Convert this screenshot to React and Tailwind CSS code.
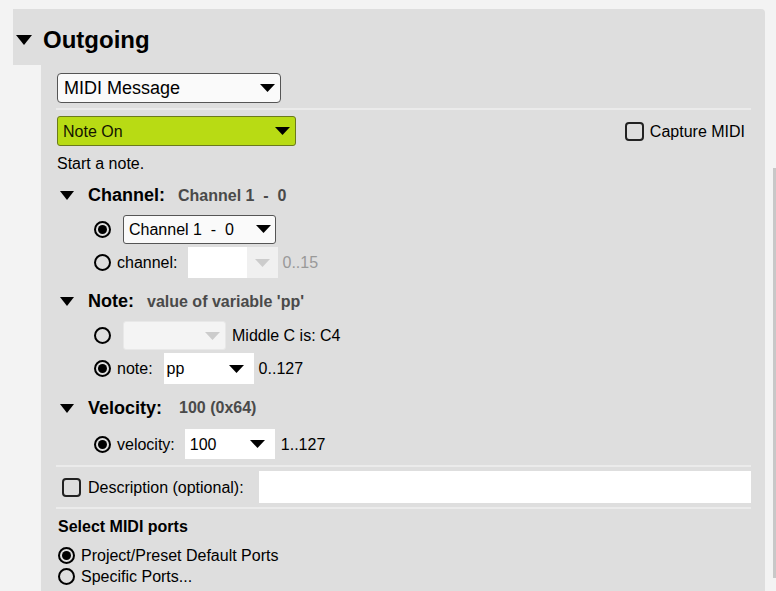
import React from "react";

const Arrow = ({ className = "fill-black" }) => (
  <svg width="15" height="8" viewBox="0 0 15 8" className={className}>
    <polygon points="0,0 15,0 7.5,8" />
  </svg>
);

const Caret = ({ w = 14, h = 9 }) => (
  <svg width={w} height={h} viewBox={`0 0 ${w} ${h}`} className="fill-black shrink-0">
    <polygon points={`0,0 ${w},0 ${w / 2},${h}`} />
  </svg>
);

const Radio = ({ checked }) => (
  <span className="w-[17px] h-[17px] rounded-full border-2 border-black flex items-center justify-center shrink-0">
    {checked && <span className="w-[9px] h-[9px] rounded-full bg-black" />}
  </span>
);

const Checkbox = () => (
  <span className="block w-[19px] h-[19px] rounded-[4px] border-2 border-[#222] shrink-0" />
);

const Separator = () => <div className="h-[2px] bg-[#ebebeb]" />;

const Section = ({ title, value, gap = "ml-[14px]" }) => (
  <div className="flex items-center pl-[4px] pt-[2px] h-full">
    <Caret />
    <span className="ml-[14px] text-[18px] font-bold text-black">{title}</span>
    <span className={`${gap} text-[16px] font-bold text-[#4a4a4a] whitespace-pre`}>{value}</span>
  </div>
);

const App = () => {
  return (
    <div
      className="w-[776px] h-[591px] bg-[#f3f3f3] overflow-hidden flex text-black"
      style={{ fontFamily: '"Liberation Sans", Arial, sans-serif' }}
    >
      <div className="w-[765px] pl-[13px] pt-[9px] flex flex-col">
        {/* Header */}
        <div className="h-[56px] bg-[#dedede] rounded-tr-[4px] flex items-center pl-[3px] pt-[5px]">
          <Caret w={16} h={10} />
          <span className="ml-[11px] text-[24px] font-bold">Outgoing</span>
        </div>

        {/* Body */}
        <div className="ml-[28px] flex-1 bg-[#dedede] pl-[15px] pr-[14px] pt-[8px] flex flex-col">
          <div className="ml-[1px] w-[224px] h-[30px] bg-[#fafafa] border border-[#555] rounded-[4px] flex items-center justify-between pl-[6px] pr-[5px]">
            <span className="text-[18px] pt-[1px]">MIDI Message</span>
            <Arrow />
          </div>

          <div className="mt-[5px]">
            <Separator />
          </div>

          <div className="mt-[6px] h-[30px] flex items-center justify-between">
            <div className="ml-[1px] w-[239px] h-[30px] bg-[#b8db14] border border-[#6b7a1c] rounded-[3px] flex items-center justify-between pl-[5px] pr-[5px]">
              <span className="text-[16px] text-[#141400] pt-[1px]">Note On</span>
              <Arrow />
            </div>
            <div className="flex items-center gap-[6px] pr-[6px] pt-[1px]">
              <Checkbox />
              <span className="text-[16px]">Capture MIDI</span>
            </div>
          </div>

          <div className="mt-[7px] h-[22px] flex items-center pl-[1px] text-[16px]">Start a note.</div>

          {/* Channel */}
          <div className="h-[39px]">
            <Section title="Channel:" value={"Channel 1  -  0"} gap="ml-[13px]" />
          </div>
          <div className="h-[30px] flex items-center pl-[38px]">
            <Radio checked />
            <div className="ml-[12px] w-[153px] h-[29px] bg-[#fafafa] border border-[#555] rounded-[3px] flex items-center justify-between pl-[5px] pr-[4px]">
              <span className="text-[16px] whitespace-pre pt-[1px]">{"Channel 1  -  0"}</span>
              <Arrow />
            </div>
          </div>
          <div className="h-[37px] flex items-center pl-[38px]">
            <Radio />
            <span className="ml-[6px] text-[16px] pt-[1px]">channel:</span>
            <div className="ml-[10px] w-[90px] h-[31px] flex">
              <div className="w-[59px] bg-white" />
              <div className="flex-1 bg-[#f0f0f0] flex items-center justify-center">
                <Arrow className="fill-[#cccccc]" />
              </div>
            </div>
            <span className="ml-[5px] text-[16px] text-[#999] pt-[1px]">0..15</span>
          </div>

          {/* Note */}
          <div className="h-[39px]">
            <Section title="Note:" value="value of variable 'pp'" gap="ml-[13px]" />
          </div>
          <div className="h-[31px] flex items-center pl-[38px]">
            <Radio />
            <div className="ml-[12px] w-[103px] h-[29px] bg-[#f4f4f4] border border-[#e8e8e8] rounded-[3px] flex items-center justify-end pr-[5px]">
              <Arrow className="fill-[#cccccc]" />
            </div>
            <span className="ml-[6px] text-[16px] pt-[1px]">Middle C is: C4</span>
          </div>
          <div className="h-[35px] flex items-center pl-[38px]">
            <Radio checked />
            <span className="ml-[6px] text-[16px] pt-[1px]">note:</span>
            <div className="ml-[11px] w-[90px] h-[31px] bg-white flex items-center justify-between pl-[3px] pr-[10px]">
              <span className="text-[16px] pt-[1px]">pp</span>
              <Arrow />
            </div>
            <span className="ml-[5px] text-[16px] pt-[1px]">0..127</span>
          </div>

          {/* Velocity */}
          <div className="h-[42px]">
            <Section title="Velocity:" value="100 (0x64)" gap="ml-[17px]" />
          </div>
          <div className="h-[31px] flex items-center pl-[38px] pt-[1px]">
            <Radio checked />
            <span className="ml-[6px] text-[16px] pt-[1px]">velocity:</span>
            <div className="ml-[10px] w-[90px] h-[30px] bg-white flex items-center justify-between pl-[5px] pr-[10px]">
              <span className="text-[16px] pt-[1px]">100</span>
              <Arrow />
            </div>
            <span className="ml-[6px] text-[16px] pt-[1px]">1..127</span>
          </div>

          <div className="mt-[6px]">
            <Separator />
          </div>

          <div className="h-[40px] flex items-center">
            <span className="ml-[6px]">
              <Checkbox />
            </span>
            <span className="ml-[7px] text-[16px] pt-[1px]">Description (optional):</span>
            <div className="ml-[15px] flex-1 h-[32px] bg-white" />
          </div>

          <Separator />

          <div className="h-[34px] flex items-center pl-[2px] pt-[1px] text-[16px] font-bold">Select MIDI ports</div>
          <div className="h-[25px] flex items-center pl-[2px] gap-[6px]">
            <Radio checked />
            <span className="text-[16px] pt-[1px]">Project/Preset Default Ports</span>
          </div>
          <div className="h-[17px] flex items-center pl-[2px] gap-[6px]">
            <Radio />
            <span className="text-[16px] pt-[1px]">Specific Ports...</span>
          </div>
        </div>
      </div>

      {/* Scrollbar */}
      <div className="ml-[8px] mt-[168px] w-[3px] h-[410px] bg-[#c8c8c8]" />
    </div>
  );
};

export default App;
